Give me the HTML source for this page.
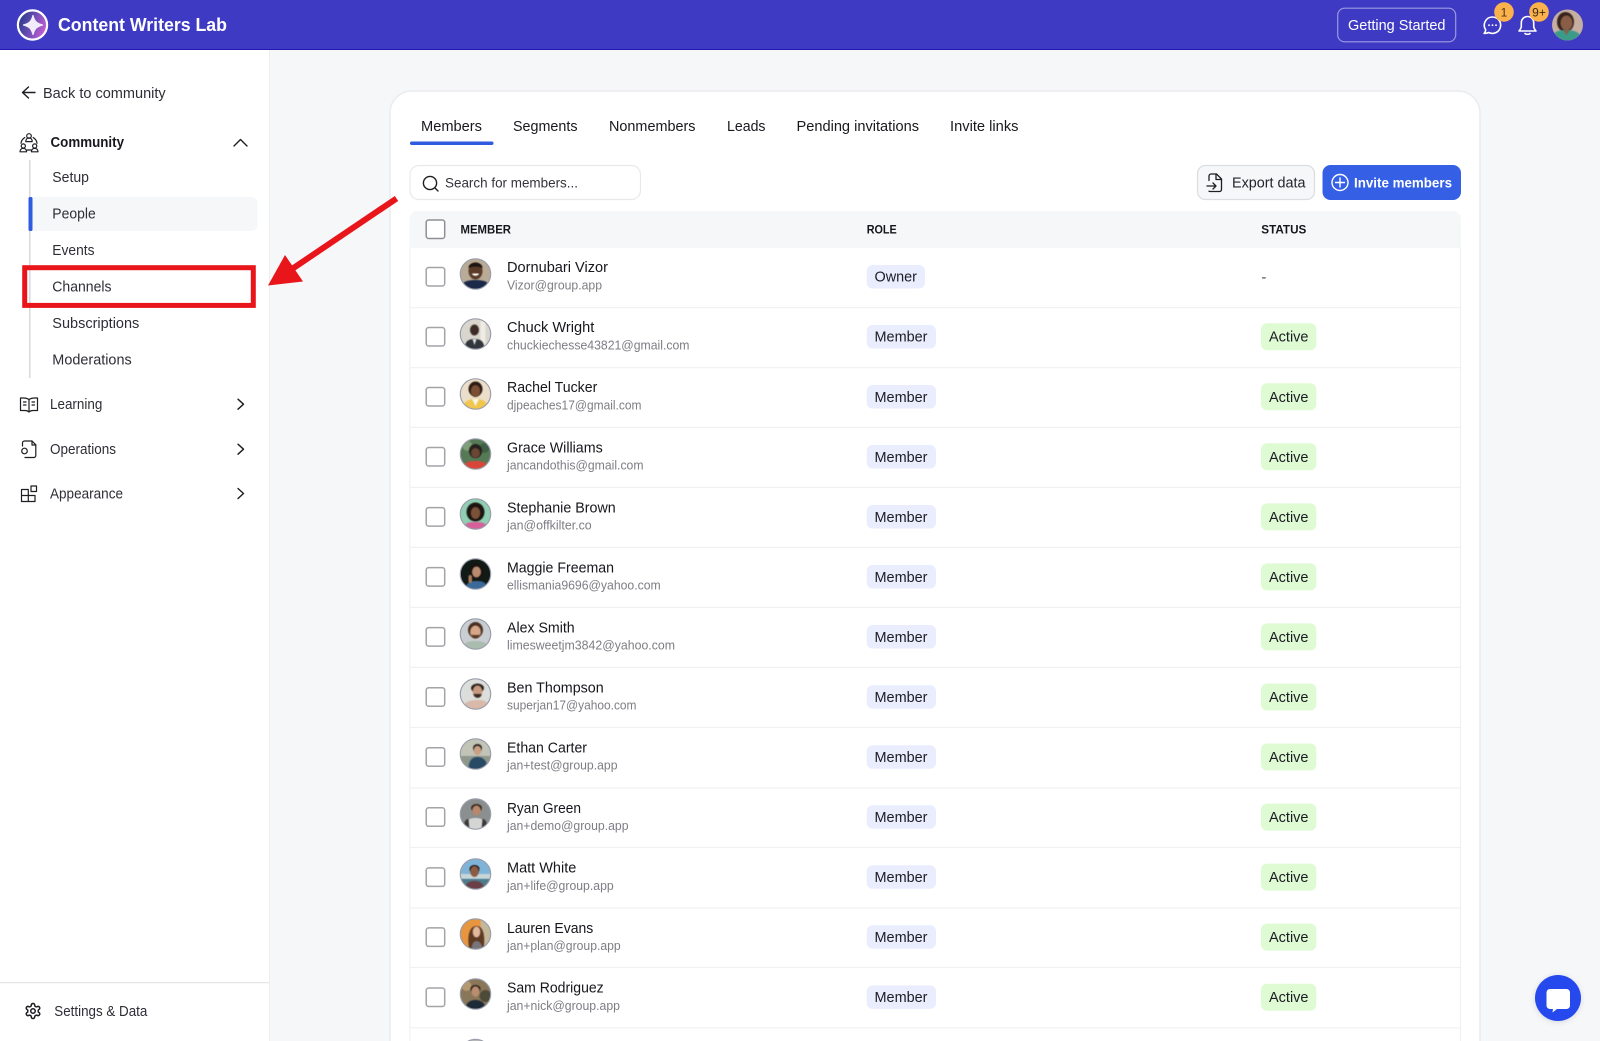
<!DOCTYPE html>
<html lang="en">
<head>
<meta charset="utf-8">
<title>Content Writers Lab - Members</title>
<style>
html,body{margin:0;padding:0;width:1600px;height:1041px;overflow:hidden;background:#f6f7f9}
svg{display:block}
text{font-family:"Liberation Sans",sans-serif;fill:#24242b}
.s{font-size:14.5px;fill:#2e2e36}
.b{font-weight:bold}
.n{font-size:14.5px;fill:#16161c}
.e{font-size:12.5px;fill:#7d7d84}
.r{font-size:14.5px;fill:#1c1c24}
.h{font-size:11.5px;font-weight:bold;fill:#15151a}
.ic{fill:none;stroke:#1d1d22;stroke-width:1.4;stroke-linecap:round;stroke-linejoin:round}
.cb{fill:#fff;stroke:#a3a3a8;stroke-width:1.5}
.ln{stroke:#f1f1f3;stroke-width:1.2}
.rb{fill:#e9edfd}
.ab{fill:#dffbd3}
.ring{fill:none;stroke:#9a9eab;stroke-width:1.2}
g[clip-path]>*{filter:blur(.6px)}
</style>
</head>
<body>
<svg xmlns="http://www.w3.org/2000/svg" width="1600" height="1041" viewBox="0 0 1600 1041">
<defs>
<linearGradient id="lg" x1="0" x2="1" y1="0.2" y2="0.6"><stop offset="0" stop-color="#1f3a86"/><stop offset="0.5" stop-color="#6a4cb4"/><stop offset="1" stop-color="#c85fd4"/></linearGradient>
<clipPath id="av"><circle r="15"/></clipPath>
<clipPath id="av2"><circle r="15.5"/></clipPath>
<filter id="sh" x="-30%" y="-30%" width="160%" height="160%"><feDropShadow dx="0" dy="1" stdDeviation="3" flood-color="#000" flood-opacity=".12"/></filter>
</defs>

<rect width="1600" height="1041" fill="#f6f7f9"/>

<!-- Header -->
<rect width="1600" height="49" fill="#3e3ac3"/>
<rect y="49" width="1600" height="1" fill="#2416b4"/>
<circle cx="32.5" cy="25" r="14.6" fill="url(#lg)" stroke="#fff" stroke-width="2.2"/>
<path d="M33 15.500c1.600 5.800 3.400 7.900 9.500 9.500-6.100 1.600-7.900 3.700-9.500 9.500-1.600-5.800-3.400-7.900-9.500-9.500 6.100-1.600 7.900-3.700 9.500-9.500z" fill="#f1ecfd" stroke="#f1ecfd" stroke-width="1.2" stroke-linejoin="round"/>
<text x="58" y="31" font-size="18" font-weight="bold" style="fill:#fff" textLength="169" lengthAdjust="spacingAndGlyphs">Content Writers Lab</text>

<rect x="1337.700" y="8.200" width="118" height="33.600" rx="7" fill="#3e3ac3" stroke="#9c9ae2" stroke-width="1.200"/>
<text x="1348" y="30" font-size="14.500" style="fill:#fff" textLength="97.500" lengthAdjust="spacingAndGlyphs">Getting Started</text>

<path d="M1492.300 17a8.200 8.200 0 1 1-3.600 15.500c-1.200.6-2.700.9-4.600.9 1-1 1.500-2.200 1.600-3.600a8.200 8.200 0 0 1 6.600-12.800z" fill="none" stroke="#fff" stroke-width="1.600" stroke-linejoin="round"/>
<circle cx="1489" cy="25.200" r=".9" fill="#fff"/><circle cx="1492.500" cy="25.200" r=".9" fill="#fff"/><circle cx="1496" cy="25.200" r=".9" fill="#fff"/>
<circle cx="1504" cy="12" r="9.800" fill="#fbb24c"/>
<text x="1504" y="16.300" font-size="12" text-anchor="middle" style="fill:#4a3515">1</text>

<path d="M1527.500 16.500a6.200 6.200 0 0 0-6.200 6.200v3.600c0 2-1 3.200-2.300 4.700h17c-1.300-1.500-2.300-2.700-2.300-4.700v-3.600a6.200 6.200 0 0 0-6.200-6.200z" fill="none" stroke="#fff" stroke-width="1.600" stroke-linejoin="round"/>
<path d="M1525 33.500c.8 1 4.200 1 5 0" fill="none" stroke="#fff" stroke-width="1.600" stroke-linecap="round"/>
<circle cx="1539" cy="12" r="9.800" fill="#fbb24c"/>
<text x="1539" y="16.300" font-size="12" text-anchor="middle" style="fill:#3b2a10">9+</text>

<g transform="translate(1567.500,25)"><g clip-path="url(#av2)">
<rect x="-16" y="-16" width="32" height="32" fill="#c6aea2"/>
<ellipse cx="-2" cy="-3" rx="8.500" ry="10" fill="#35231c"/>
<ellipse cx="-1" cy="-2" rx="6" ry="7.500" fill="#8a5d47"/>
<path d="M-16 16c0-9 6-11 15-11s15 3 15 11z" fill="#3b9b88"/>
<path d="M-4 5l3 5 3-5z" fill="#8a5d47"/>
</g></g>

<!-- Sidebar -->
<rect width="269" height="991" y="50" fill="#fff"/>
<rect x="269" y="50" width="1" height="991" fill="#eceef1"/>
<rect y="982" width="269" height="1.300" fill="#e6e6e9"/>

<path d="M35 92.500H23M28.500 87l-6 5.500 6 5.500" class="ic"/>
<text class="s" x="43" y="98" textLength="122.700" lengthAdjust="spacingAndGlyphs">Back to community</text>

<g class="ic" style="stroke-width:1.200">
<circle cx="29" cy="136" r="2.300"/><path d="M25.800 141.600c0-5 6.400-5 6.400 0z"/>
<circle cx="23.300" cy="146" r="2.100"/><path d="M20 151.800c0-4.600 6.600-4.600 6.600 0z"/>
<circle cx="34.700" cy="146" r="2.100"/><path d="M31.400 151.800c0-4.600 6.600-4.600 6.600 0z"/>
<path d="M24.800 137.500c-2.400 1.600-3.600 3.600-3.800 5.800M33.200 137.500c2.400 1.600 3.600 3.600 3.800 5.800M27 150h4"/>
</g>
<text class="s b" style="fill:#18181e" x="50.500" y="147" textLength="73.500" lengthAdjust="spacingAndGlyphs">Community</text>
<path d="M234 146l6.500-6.500 6.500 6.500" class="ic"/>

<rect x="29" y="160" width="1.600" height="218" fill="#dbdbdf"/>
<rect x="29" y="197" width="228.500" height="34" rx="6" fill="#f6f7f9"/>
<rect x="28.500" y="197" width="4" height="34" rx="1.500" fill="#2f5be0"/>
<text class="s" x="52.300" y="182" textLength="36.700" lengthAdjust="spacingAndGlyphs">Setup</text>
<text class="s" x="52.300" y="218.500" textLength="43.400" lengthAdjust="spacingAndGlyphs">People</text>
<text class="s" x="52.300" y="255" textLength="42.200" lengthAdjust="spacingAndGlyphs">Events</text>
<text class="s" x="52.300" y="291.500" textLength="59.200" lengthAdjust="spacingAndGlyphs">Channels</text>
<text class="s" x="52.300" y="328" textLength="87" lengthAdjust="spacingAndGlyphs">Subscriptions</text>
<text class="s" x="52.300" y="364.500" textLength="79.400" lengthAdjust="spacingAndGlyphs">Moderations</text>

<g class="ic" style="stroke-width:1.200">
<path d="M29 399.500c-1.500-1-3-1.500-5-1.500h-3.500v12.500H25c1.700 0 3 .5 4 1.500 1-1 2.300-1.500 4-1.500h4.500V398H34c-2 0-3.500.5-5 1.500z"/>
<path d="M29 399.500V412M23.500 402h2.500M23.500 405h2.500M32 402h2.500M32 405h2.500"/>
</g>
<text class="s" x="50" y="409" textLength="52.300" lengthAdjust="spacingAndGlyphs">Learning</text>
<path d="M238 399.200l5.500 5-5.500 5" class="ic"/>

<g class="ic" style="stroke-width:1.200">
<path d="M22.500 446v-3a2 2 0 0 1 2-2h7.500l3.800 3.800V455.500a2 2 0 0 1-2 2H25"/>
<path d="M32 441v4h3.800"/>
<circle cx="24.500" cy="451" r="2.800"/>
</g>
<text class="s" x="50" y="454" textLength="66" lengthAdjust="spacingAndGlyphs">Operations</text>
<path d="M238 444.200l5.500 5-5.500 5" class="ic"/>

<g class="ic" style="stroke-width:1.200">
<path d="M21.500 489.500h6.800v12h-6.800zM21.500 495.500H35v6H21.500zM31 486h5.500v5.500H31z"/>
</g>
<text class="s" x="50" y="498.500" textLength="73" lengthAdjust="spacingAndGlyphs">Appearance</text>
<path d="M238 488.500l5.500 5-5.500 5" class="ic"/>

<g transform="translate(24,1002) scale(.75)" class="ic" style="stroke-width:2">
<path d="M12.220 2h-.44a2 2 0 0 0-2 2v.18a2 2 0 0 1-1 1.730l-.43.250a2 2 0 0 1-2 0l-.15-.08a2 2 0 0 0-2.730.730l-.22.380a2 2 0 0 0 .730 2.730l.15.100a2 2 0 0 1 1 1.720v.510a2 2 0 0 1-1 1.740l-.15.090a2 2 0 0 0-.730 2.730l.22.380a2 2 0 0 0 2.730.730l.15-.08a2 2 0 0 1 2 0l.43.250a2 2 0 0 1 1 1.730V20a2 2 0 0 0 2 2h.44a2 2 0 0 0 2-2v-.18a2 2 0 0 1 1-1.730l.43-.25a2 2 0 0 1 2 0l.15.080a2 2 0 0 0 2.730-.73l.22-.39a2 2 0 0 0-.73-2.730l-.15-.08a2 2 0 0 1-1-1.740v-.5a2 2 0 0 1 1-1.740l.15-.09a2 2 0 0 0 .73-2.730l-.22-.38a2 2 0 0 0-2.730-.73l-.15.080a2 2 0 0 1-2 0l-.43-.25a2 2 0 0 1-1-1.730V4a2 2 0 0 0-2-2z"/>
<circle cx="12" cy="12" r="3"/>
</g>
<text class="s" x="54.300" y="1016" textLength="93" lengthAdjust="spacingAndGlyphs">Settings &amp; Data</text>

<!-- Card -->
<path d="M390 1042V113a22 22 0 0 1 22-22h1046a22 22 0 0 1 22 22v929z" fill="#fff" stroke="#ebecef" stroke-width="1.500"/>

<!-- Red callout -->
<rect x="24.700" y="267.700" width="228.600" height="37.700" fill="none" stroke="#e8151b" stroke-width="5"/>
<path d="M396.500 198.500L292 269" fill="none" stroke="#e8151b" stroke-width="6"/>
<path d="M268 285.500L285 255l18 26.500z" fill="#e8151b"/>

<text x="421" y="131" font-size="14.500" style="fill:#18181e" textLength="61" lengthAdjust="spacingAndGlyphs">Members</text>
<text x="513" y="131" font-size="14.500" style="fill:#18181e" textLength="64.500" lengthAdjust="spacingAndGlyphs">Segments</text>
<text x="609" y="131" font-size="14.500" style="fill:#18181e" textLength="86.500" lengthAdjust="spacingAndGlyphs">Nonmembers</text>
<text x="727" y="131" font-size="14.500" style="fill:#18181e" textLength="38.500" lengthAdjust="spacingAndGlyphs">Leads</text>
<text x="796.500" y="131" font-size="14.500" style="fill:#18181e" textLength="122.500" lengthAdjust="spacingAndGlyphs">Pending invitations</text>
<text x="950" y="131" font-size="14.500" style="fill:#18181e" textLength="68.500" lengthAdjust="spacingAndGlyphs">Invite links</text>
<rect x="410" y="141.500" width="83.500" height="3.500" rx="1.700" fill="#2f5be0"/>

<rect x="410" y="165.500" width="230.500" height="34" rx="9" fill="#fff" stroke="#e8e9ec" stroke-width="1.200"/>
<circle cx="430" cy="183" r="6.600" class="ic"/>
<path d="M435 188l3 3" class="ic"/>
<text x="445" y="187.500" font-size="14" style="fill:#34343c" textLength="133" lengthAdjust="spacingAndGlyphs">Search for members...</text>

<rect x="1197.500" y="165.500" width="117" height="34" rx="8" fill="#f6f7f9" stroke="#dcdde1" stroke-width="1.200"/>
<g class="ic" style="stroke-width:1.300">
<path d="M1209 180.500V176a2 2 0 0 1 2-2h5.500l5 5v10.500a2 2 0 0 1-2 2h-9.500a2 2 0 0 1-1-.3"/>
<path d="M1216 174v5.500h5.500M1207 186h9M1213 183l3 3-3 3"/>
</g>
<text x="1232" y="187.500" font-size="14.500" style="fill:#24242b" textLength="73.500" lengthAdjust="spacingAndGlyphs">Export data</text>

<rect x="1322.500" y="165" width="138.500" height="35" rx="8" fill="#3560e6"/>
<circle cx="1340" cy="182.500" r="8" fill="none" stroke="#fff" stroke-width="1.400"/>
<path d="M1340 178v9M1335.500 182.500h9" stroke="#fff" stroke-width="1.400" stroke-linecap="round"/>
<text x="1354" y="187.500" font-size="14" font-weight="bold" style="fill:#fff" textLength="98" lengthAdjust="spacingAndGlyphs">Invite members</text>

<!-- Table -->
<path d="M409.500 248v-29a8 8 0 0 1 8-8h1035.500a8 8 0 0 1 8 8v29z" fill="#f6f7f9"/>
<path d="M409.800 248V1041M1460.500 248V1041" class="ln"/>
<rect class="cb" x="426.200" y="220" width="18.500" height="18.500" rx="2.500" style="stroke:#8f8f94"/>
<text class="h" x="460.500" y="233.500" textLength="50.500" lengthAdjust="spacingAndGlyphs">MEMBER</text>
<text class="h" x="866.700" y="233.500" textLength="30" lengthAdjust="spacingAndGlyphs">ROLE</text>
<text class="h" x="1261.300" y="233.500" textLength="45" lengthAdjust="spacingAndGlyphs">STATUS</text>

<path class="ln" d="M410 307.700H1460M410 367.700H1460M410 427.400H1460M410 487.400H1460M410 547.400H1460M410 607.400H1460M410 667.400H1460M410 727.500H1460M410 788H1460M410 847.500H1460M410 908H1460M410 967.500H1460M410 1027.800H1460"/>

<!-- Row 0 -->
<rect class="cb" x="426.200" y="267.500" width="18.500" height="18.500" rx="2.500"/>
<g transform="translate(475.500,274)"><g clip-path="url(#av)"><rect x="-16" y="-16" width="32" height="32" fill="#b9ab95"/><ellipse cy="-3" rx="7" ry="8.500" fill="#5a3a28"/><path d="M-7-6c0-7 14-7 14 0-4-2-10-2-14 0z" fill="#1c1410"/><path d="M-3.500-.5h7c-.5 3-6.500 3-7 0z" fill="#fff"/><path d="M-15 16c0-8 6-10 15-10s15 2 15 10z" fill="#1c2a4a"/></g><circle r="15.200" class="ring"/></g>
<text class="n" x="507" y="272" textLength="101" lengthAdjust="spacingAndGlyphs">Dornubari Vizor</text>
<text class="e" x="507" y="289.300" textLength="95" lengthAdjust="spacingAndGlyphs">Vizor@group.app</text>
<rect class="rb" x="866.700" y="265" width="58.300" height="23.500" rx="6"/>
<text class="r" x="874.500" y="281.700" textLength="42.500" lengthAdjust="spacingAndGlyphs">Owner</text>
<text x="1261.500" y="282" font-size="14.500" style="fill:#444">-</text>

<!-- Row 1 -->
<rect class="cb" x="426.200" y="327.500" width="18.500" height="18.500" rx="2.500"/>
<g transform="translate(475.500,334)"><g clip-path="url(#av)"><rect x="-16" y="-16" width="32" height="32" fill="#d9d6cd"/><rect x="5" y="-16" width="5" height="32" fill="#efece4"/><ellipse cx="-1" cy="-4" rx="4.500" ry="5.500" fill="#3d2c25"/><path d="M-11 16c0-9 4-11 10-11s10 2 10 11z" fill="#33363c"/><path d="M-3 5l2 6 2-6z" fill="#e8e8e8"/></g><circle r="15.200" class="ring"/></g>
<text class="n" x="507" y="332" textLength="87.300" lengthAdjust="spacingAndGlyphs">Chuck Wright</text>
<text class="e" x="507" y="349.300" textLength="182.500" lengthAdjust="spacingAndGlyphs">chuckiechesse43821@gmail.com</text>
<rect class="rb" x="866.700" y="325" width="69.300" height="23.500" rx="6"/>
<text class="r" x="874.500" y="341.700" textLength="53" lengthAdjust="spacingAndGlyphs">Member</text>
<rect class="ab" x="1261" y="323.200" width="55.300" height="27" rx="6"/>
<text class="r" x="1269" y="341.700" textLength="39.500" lengthAdjust="spacingAndGlyphs">Active</text>

<!-- Row 2 -->
<rect class="cb" x="426.200" y="387.500" width="18.500" height="18.500" rx="2.500"/>
<g transform="translate(475.500,394)"><g clip-path="url(#av)"><rect x="-16" y="-16" width="32" height="32" fill="#ecdfc9"/><ellipse cy="-5" rx="7" ry="7.500" fill="#2a1a14"/><ellipse cy="-3" rx="4.800" ry="6" fill="#7a4f33"/><path d="M-13 16c0-8 5-11 13-11s13 3 13 11z" fill="#f0c64d"/><path d="M-3.500 5l3.500 7 3.500-7z" fill="#f7f5f0"/></g><circle r="15.200" class="ring"/></g>
<text class="n" x="507" y="392" textLength="90.300" lengthAdjust="spacingAndGlyphs">Rachel Tucker</text>
<text class="e" x="507" y="409.300" textLength="134.500" lengthAdjust="spacingAndGlyphs">djpeaches17@gmail.com</text>
<rect class="rb" x="866.700" y="385" width="69.300" height="23.500" rx="6"/>
<text class="r" x="874.500" y="401.800" textLength="53" lengthAdjust="spacingAndGlyphs">Member</text>
<rect class="ab" x="1261" y="383.300" width="55.300" height="27" rx="6"/>
<text class="r" x="1269" y="401.800" textLength="39.500" lengthAdjust="spacingAndGlyphs">Active</text>

<!-- Row 3 -->
<rect class="cb" x="426.200" y="447.500" width="18.500" height="18.500" rx="2.500"/>
<g transform="translate(475.500,454)"><g clip-path="url(#av)"><rect x="-16" y="-16" width="32" height="32" fill="#557a55"/><circle cx="-8" cy="-8" r="5" fill="#7f9f78"/><circle cx="9" cy="-6" r="5" fill="#3f6044"/><ellipse cy="-3" rx="6.500" ry="7" fill="#26201e"/><ellipse cy="-1" rx="4.500" ry="5" fill="#6a4634"/><path d="M-13 16c0-7 5-9 13-9s13 2 13 9z" fill="#d8463a"/></g><circle r="15.200" class="ring"/></g>
<text class="n" x="507" y="452.300" textLength="95.700" lengthAdjust="spacingAndGlyphs">Grace Williams</text>
<text class="e" x="507" y="469.600" textLength="136.500" lengthAdjust="spacingAndGlyphs">jancandothis@gmail.com</text>
<rect class="rb" x="866.700" y="445" width="69.300" height="23.500" rx="6"/>
<text class="r" x="874.500" y="461.800" textLength="53" lengthAdjust="spacingAndGlyphs">Member</text>
<rect class="ab" x="1261" y="443.300" width="55.300" height="27" rx="6"/>
<text class="r" x="1269" y="461.800" textLength="39.500" lengthAdjust="spacingAndGlyphs">Active</text>

<!-- Row 4 -->
<rect class="cb" x="426.200" y="507.600" width="18.500" height="18.500" rx="2.500"/>
<g transform="translate(475.500,514)"><g clip-path="url(#av)"><rect x="-16" y="-16" width="32" height="32" fill="#8fd0b2"/><ellipse cy="-2" rx="9" ry="9.500" fill="#1e1512"/><ellipse cy="-1" rx="4.800" ry="6" fill="#7b5238"/><path d="M-12 16c0-7 5-8 12-8s12 1 12 8z" fill="#d6609a"/></g><circle r="15.200" class="ring"/></g>
<text class="n" x="507" y="512.300" textLength="108.700" lengthAdjust="spacingAndGlyphs">Stephanie Brown</text>
<text class="e" x="507" y="529.600" textLength="84.700" lengthAdjust="spacingAndGlyphs">jan@offkilter.co</text>
<rect class="rb" x="866.700" y="505" width="69.300" height="23.500" rx="6"/>
<text class="r" x="874.500" y="521.900" textLength="53" lengthAdjust="spacingAndGlyphs">Member</text>
<rect class="ab" x="1261" y="503.400" width="55.300" height="27" rx="6"/>
<text class="r" x="1269" y="521.900" textLength="39.500" lengthAdjust="spacingAndGlyphs">Active</text>

<!-- Row 5 -->
<rect class="cb" x="426.200" y="567.600" width="18.500" height="18.500" rx="2.500"/>
<g transform="translate(475.500,574)"><g clip-path="url(#av)"><rect x="-16" y="-16" width="32" height="32" fill="#121a16"/><ellipse cx="1" cy="-3" rx="6.500" ry="7.500" fill="#1a1210"/><ellipse cx="1" cy="-2" rx="4.500" ry="5.500" fill="#b98a6d"/><path d="M-10 16c0-7 4-9 11-9s11 2 11 9z" fill="#3a6a9a"/><rect x="-7" y="1" width="3.500" height="8" rx="1.700" fill="#a97a5d"/></g><circle r="15.200" class="ring"/></g>
<text class="n" x="507" y="572.300" textLength="107" lengthAdjust="spacingAndGlyphs">Maggie Freeman</text>
<text class="e" x="507" y="589.600" textLength="153.700" lengthAdjust="spacingAndGlyphs">ellismania9696@yahoo.com</text>
<rect class="rb" x="866.700" y="565" width="69.300" height="23.500" rx="6"/>
<text class="r" x="874.500" y="581.900" textLength="53" lengthAdjust="spacingAndGlyphs">Member</text>
<rect class="ab" x="1261" y="563.400" width="55.300" height="27" rx="6"/>
<text class="r" x="1269" y="581.900" textLength="39.500" lengthAdjust="spacingAndGlyphs">Active</text>

<!-- Row 6 -->
<rect class="cb" x="426.200" y="627.600" width="18.500" height="18.500" rx="2.500"/>
<g transform="translate(475.500,634)"><g clip-path="url(#av)"><rect x="-16" y="-16" width="32" height="32" fill="#c9ced2"/><ellipse cy="-4" rx="7.500" ry="8" fill="#4a3022"/><ellipse cy="-2" rx="5.300" ry="6.500" fill="#d5a788"/><path d="M-4.500 0c0 6 9 6 9 0l-1 1h-7z" fill="#5a3a28"/><path d="M-13 16c0-7 5-9 13-9s13 2 13 9z" fill="#a9bcae"/></g><circle r="15.200" class="ring"/></g>
<text class="n" x="507" y="632.300" textLength="67.700" lengthAdjust="spacingAndGlyphs">Alex Smith</text>
<text class="e" x="507" y="649.600" textLength="168" lengthAdjust="spacingAndGlyphs">limesweetjm3842@yahoo.com</text>
<rect class="rb" x="866.700" y="625" width="69.300" height="23.500" rx="6"/>
<text class="r" x="874.500" y="641.900" textLength="53" lengthAdjust="spacingAndGlyphs">Member</text>
<rect class="ab" x="1261" y="623.400" width="55.300" height="27" rx="6"/>
<text class="r" x="1269" y="641.900" textLength="39.500" lengthAdjust="spacingAndGlyphs">Active</text>

<!-- Row 7 -->
<rect class="cb" x="426.200" y="687.700" width="18.500" height="18.500" rx="2.500"/>
<g transform="translate(475.500,694)"><g clip-path="url(#av)"><rect x="-16" y="-16" width="32" height="32" fill="#dcdedc"/><ellipse cx="2" cy="-6" rx="6.500" ry="4.500" fill="#2f241e"/><ellipse cx="2" cy="-2.500" rx="4.800" ry="6" fill="#c79a80"/><path d="M-2 0c.5 5 8 5 8 0z" fill="#3a2c24"/><path d="M-13 16c0-7 6-10 15-10s12 3 12 10z" fill="#d8b9aa"/></g><circle r="15.200" class="ring"/></g>
<text class="n" x="507" y="692.300" textLength="96.700" lengthAdjust="spacingAndGlyphs">Ben Thompson</text>
<text class="e" x="507" y="709.600" textLength="129.500" lengthAdjust="spacingAndGlyphs">superjan17@yahoo.com</text>
<rect class="rb" x="866.700" y="685.200" width="69.300" height="23.500" rx="6"/>
<text class="r" x="874.500" y="702" textLength="53" lengthAdjust="spacingAndGlyphs">Member</text>
<rect class="ab" x="1261" y="683.500" width="55.300" height="27" rx="6"/>
<text class="r" x="1269" y="702" textLength="39.500" lengthAdjust="spacingAndGlyphs">Active</text>

<!-- Row 8 -->
<rect class="cb" x="426.200" y="747.700" width="18.500" height="18.500" rx="2.500"/>
<g transform="translate(475.500,754)"><g clip-path="url(#av)"><rect x="-16" y="-16" width="32" height="32" fill="#c2c4b8"/><rect x="-16" y="2" width="32" height="14" fill="#8f978a"/><ellipse cx="2" cy="-6" rx="4.500" ry="4" fill="#2c2420"/><ellipse cx="2" cy="-3.500" rx="3.800" ry="4.800" fill="#c9a084"/><path d="M-7 16c0-9 3-13 9-13s10 4 10 13z" fill="#284a66"/></g><circle r="15.200" class="ring"/></g>
<text class="n" x="507" y="752.300" textLength="80" lengthAdjust="spacingAndGlyphs">Ethan Carter</text>
<text class="e" x="507" y="769.600" textLength="110.500" lengthAdjust="spacingAndGlyphs">jan+test@group.app</text>
<rect class="rb" x="866.700" y="745.200" width="69.300" height="23.500" rx="6"/>
<text class="r" x="874.500" y="762" textLength="53" lengthAdjust="spacingAndGlyphs">Member</text>
<rect class="ab" x="1261" y="743.500" width="55.300" height="27" rx="6"/>
<text class="r" x="1269" y="762" textLength="39.500" lengthAdjust="spacingAndGlyphs">Active</text>

<!-- Row 9 -->
<rect class="cb" x="426.200" y="807.800" width="18.500" height="18.500" rx="2.500"/>
<g transform="translate(475.500,814)"><g clip-path="url(#av)"><rect x="-16" y="-16" width="32" height="32" fill="#8b8f8f"/><ellipse cx="1" cy="-6" rx="5.500" ry="4" fill="#3a2a20"/><ellipse cx="1" cy="-3.500" rx="4.300" ry="5" fill="#b7886c"/><path d="M-11 16c0-9 4-12 11-12s11 3 11 12z" fill="#d5d5d5"/><path d="M-12 16c0-8 2-11 5-11l1 11zM12 16c0-8-2-11-5-11l-1 11z" fill="#3a3a38"/></g><circle r="15.200" class="ring"/></g>
<text class="n" x="507" y="812.800" textLength="74" lengthAdjust="spacingAndGlyphs">Ryan Green</text>
<text class="e" x="507" y="830" textLength="121.500" lengthAdjust="spacingAndGlyphs">jan+demo@group.app</text>
<rect class="rb" x="866.700" y="805.300" width="69.300" height="23.500" rx="6"/>
<text class="r" x="874.500" y="822.100" textLength="53" lengthAdjust="spacingAndGlyphs">Member</text>
<rect class="ab" x="1261" y="803.600" width="55.300" height="27" rx="6"/>
<text class="r" x="1269" y="822.100" textLength="39.500" lengthAdjust="spacingAndGlyphs">Active</text>

<!-- Row 10 -->
<rect class="cb" x="426.200" y="867.900" width="18.500" height="18.500" rx="2.500"/>
<g transform="translate(475.500,874)"><g clip-path="url(#av)"><rect x="-16" y="-16" width="32" height="32" fill="#7fb4d8"/><rect x="-16" y="0" width="32" height="5" fill="#c8d6d8"/><rect x="-16" y="5" width="32" height="11" fill="#4f7c8c"/><ellipse cx="-1" cy="-5" rx="5" ry="4" fill="#1d1512"/><ellipse cx="-1" cy="-2.500" rx="4.300" ry="5.500" fill="#8b5c42"/><path d="M-11 16c0-6 4-9 10-9s10 3 10 9z" fill="#6a3f46"/></g><circle r="15.200" class="ring"/></g>
<text class="n" x="507" y="872.500" textLength="69.300" lengthAdjust="spacingAndGlyphs">Matt White</text>
<text class="e" x="507" y="889.800" textLength="106.700" lengthAdjust="spacingAndGlyphs">jan+life@group.app</text>
<rect class="rb" x="866.700" y="865.300" width="69.300" height="23.500" rx="6"/>
<text class="r" x="874.500" y="882.100" textLength="53" lengthAdjust="spacingAndGlyphs">Member</text>
<rect class="ab" x="1261" y="863.600" width="55.300" height="27" rx="6"/>
<text class="r" x="1269" y="882.100" textLength="39.500" lengthAdjust="spacingAndGlyphs">Active</text>

<!-- Row 11 -->
<rect class="cb" x="426.200" y="927.900" width="18.500" height="18.500" rx="2.500"/>
<g transform="translate(475.500,934)"><g clip-path="url(#av)"><rect x="-16" y="-16" width="32" height="32" fill="#e8953f"/><rect x="5" y="-16" width="12" height="32" fill="#c7b79a"/><path d="M-6 16c-3-14 0-24 7-24s9 10 7 24z" fill="#5e3a22"/><ellipse cx="1" cy="-2" rx="3.800" ry="5.500" fill="#e2b89c"/><path d="M-4 16c0-6 2-9 5-9s6 3 6 9z" fill="#77757a"/></g><circle r="15.200" class="ring"/></g>
<text class="n" x="507" y="932.800" textLength="86.300" lengthAdjust="spacingAndGlyphs">Lauren Evans</text>
<text class="e" x="507" y="950" textLength="113.700" lengthAdjust="spacingAndGlyphs">jan+plan@group.app</text>
<rect class="rb" x="866.700" y="925.300" width="69.300" height="23.500" rx="6"/>
<text class="r" x="874.500" y="942.100" textLength="53" lengthAdjust="spacingAndGlyphs">Member</text>
<rect class="ab" x="1261" y="923.600" width="55.300" height="27" rx="6"/>
<text class="r" x="1269" y="942.100" textLength="39.500" lengthAdjust="spacingAndGlyphs">Active</text>

<!-- Row 12 -->
<rect class="cb" x="426.200" y="988" width="18.500" height="18.500" rx="2.500"/>
<g transform="translate(475.500,994)"><g clip-path="url(#av)"><rect x="-16" y="-16" width="32" height="32" fill="#8a7658"/><circle cx="-9" cy="-8" r="5" fill="#b59a70"/><circle cx="10" cy="2" r="6" fill="#4e4a3a"/><ellipse cy="-5" rx="5" ry="4" fill="#2a201a"/><ellipse cy="-2.500" rx="4.200" ry="5.200" fill="#b98d70"/><path d="M-10 16c0-7 4-10 10-10s10 3 10 10z" fill="#1e2a38"/></g><circle r="15.200" class="ring"/></g>
<text class="n" x="507" y="992.600" textLength="96.700" lengthAdjust="spacingAndGlyphs">Sam Rodriguez</text>
<text class="e" x="507" y="1009.900" textLength="113" lengthAdjust="spacingAndGlyphs">jan+nick@group.app</text>
<rect class="rb" x="866.700" y="985.400" width="69.300" height="23.500" rx="6"/>
<text class="r" x="874.500" y="1002.200" textLength="53" lengthAdjust="spacingAndGlyphs">Member</text>
<rect class="ab" x="1261" y="983.700" width="55.300" height="27" rx="6"/>
<text class="r" x="1269" y="1002.200" textLength="39.500" lengthAdjust="spacingAndGlyphs">Active</text>

<!-- Row 13 partial -->
<circle cx="475.500" cy="1054.500" r="15.200" fill="#b8b8b8" stroke="#9a9eab" stroke-width="1.200"/>

<!-- Chat bubble -->
<circle cx="1558" cy="998" r="23" fill="#2748ee" filter="url(#sh)"/>
<path d="M1550 989h16.500a3.500 3.500 0 0 1 3.500 3.500v13a3.500 3.500 0 0 1-3.500 3.500h-9.500l-4.500 3.500.5-3.500h-3a3.500 3.500 0 0 1-3.500-3.500v-13a3.500 3.500 0 0 1 3.500-3.500z" fill="#fff"/>
</svg>
</body>
</html>
